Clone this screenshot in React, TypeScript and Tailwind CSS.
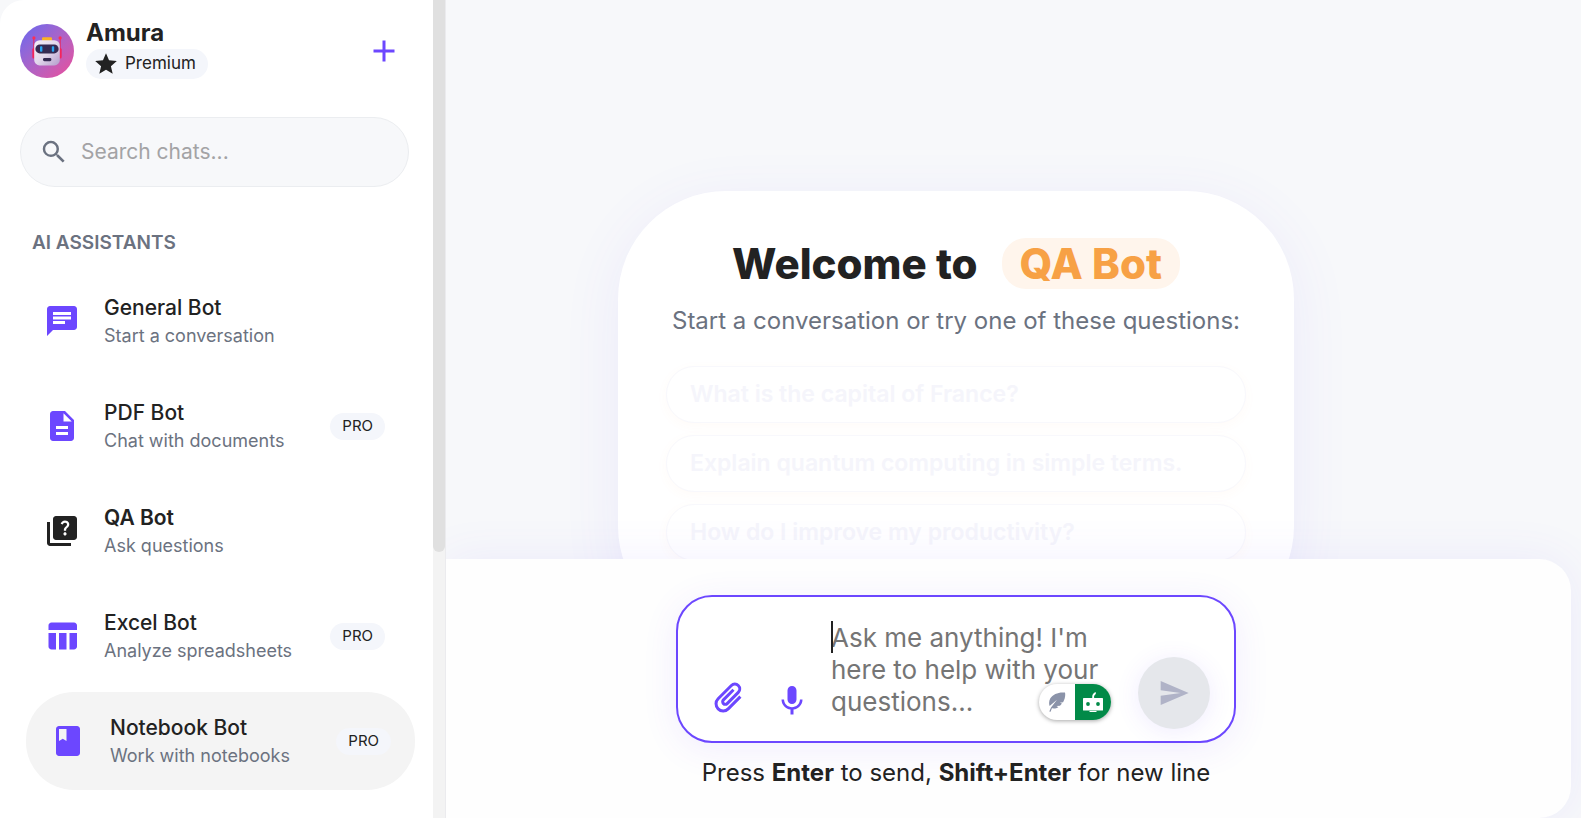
import React from 'react';
import {
  MdAdd,
  MdStar,
  MdSearch,
  MdChat,
  MdDescription,
  MdQuiz,
  MdTableChart,
  MdBook,
  MdMic,
  MdSend,
} from 'react-icons/md';

function RobotAvatar() {
  return (
    <span className="mb-px flex size-[54px] shrink-0 items-center justify-center rounded-full bg-linear-135 from-[#6366f1] to-[#ec4899]">
      <svg viewBox="0 0 30 30" className="size-[30px]" aria-hidden="true">
        <defs>
          <linearGradient id="face" x1="0" y1="0" x2="1" y2="1">
            <stop offset="0" stopColor="#f4eef7" />
            <stop offset="0.5" stopColor="#e2d8ec" />
            <stop offset="1" stopColor="#b39ccb" />
          </linearGradient>
        </defs>
        <path d="M1.800 2v14M28.200 2v14" stroke="#e8265f" strokeWidth="1" />
        <circle cx="1.900" cy="1.900" r="1.600" fill="#ff2d55" />
        <circle cx="28.100" cy="1.900" r="1.600" fill="#ff2d55" />
        <rect x="0.300" y="12" width="3" height="10.500" rx="1.500" fill="#f4245c" />
        <rect x="26.700" y="12" width="3" height="10.500" rx="1.500" fill="#f4245c" />
        <rect x="10" y="1.200" width="10" height="5" rx="1.200" fill="#fbb324" />
        <rect x="2.200" y="4.200" width="25.600" height="25.200" rx="5.500" fill="url(#face)" />
        <rect x="3.400" y="8.400" width="23.200" height="9" rx="4.400" fill="#352a52" />
        <rect x="8" y="10.200" width="2.400" height="5.600" rx="0.800" fill="#27a5f3" />
        <rect x="19.800" y="10.200" width="2.400" height="5.600" rx="0.800" fill="#27a5f3" />
        <rect x="11" y="22" width="8.400" height="3.200" rx="1.400" fill="#352a52" />
      </svg>
    </span>
  );
}

function PaperclipIcon() {
  return (
    <svg viewBox="0 0 24 24" className="size-9 rotate-45" fill="none" stroke="currentColor" strokeWidth="2" aria-hidden="true">
      <path d="M16.750 6v11.500a4.750 4.750 0 0 1-9.500 0V5a3.250 3.250 0 0 1 6.500 0v10.500a1.750 1.750 0 0 1-3.500 0V6" />
    </svg>
  );
}

function QuillRobotToggle() {
  return (
    <span className="flex h-9 w-[72px] overflow-hidden rounded-full bg-white shadow-[0_1px_4px_rgba(0,0,0,0.35)]">
      <span className="flex flex-1 items-center justify-center">
        <svg viewBox="0 0 18 20" className="h-5 w-[18px]" aria-hidden="true">
          <path d="M17 .6C11-.2 5 2 2.200 6.500 .9 9 .8 11.500 1.600 14L9 7.800 3 15.600 1.300 19.500l1.300.2 1.300-3.400c2.300.3 4.700.1 6.500-1.100L8.500 14l3.500-.2 2-2.400-2.200-.7 3.300-.4C17 7 17.600 3.500 17 .6z" fill="#8b93a9" />
        </svg>
      </span>
      <span className="flex flex-1 items-center justify-center bg-[#028a48]">
        <svg viewBox="0 0 20 20" className="size-5" aria-hidden="true">
          <path d="M12.500 0c-2.400 1-3.500 2.800-3.300 6h2c-.4-1.500 0-2.500 1.100-3.400.7-.7.800-1.500.2-2.600z" fill="#fff" />
          <rect x="0" y="6" width="20" height="12.500" rx="0.600" fill="#fff" />
          <rect x="6.500" y="18.900" width="7" height="1.100" fill="#fff" />
          <circle cx="5" cy="12" r="1.900" fill="#028a48" />
          <circle cx="15" cy="12" r="1.900" fill="#028a48" />
        </svg>
      </span>
    </span>
  );
}

const bots = [
  { name: 'General Bot', text: 'Start a conversation', icon: MdChat },
  { name: 'PDF Bot', text: 'Chat with documents', icon: MdDescription, pro: true },
  { name: 'QA Bot', text: 'Ask questions', icon: MdQuiz, current: true },
  { name: 'Excel Bot', text: 'Analyze spreadsheets', icon: MdTableChart, pro: true },
  { name: 'Notebook Bot', text: 'Work with notebooks', icon: MdBook, pro: true, hovered: true },
];

const questions = [
  'What is the capital of France?',
  'Explain quantum computing in simple terms.',
  'How do I improve my productivity?',
];

function Sidebar() {
  return (
    <aside className="relative z-20 flex w-[446px] shrink-0 overflow-hidden rounded-tl-3xl border-r border-[#ebebee] bg-white">
      <div className="flex min-w-0 flex-1 flex-col px-5 pt-[18px]">
        <header className="flex items-end gap-3">
          <RobotAvatar />
          <div className="flex flex-1 flex-col items-start gap-0.5">
            <h1 className="text-2xl leading-[29px] font-bold">Amura</h1>
            <span className="flex h-[30px] items-center gap-1.5 rounded-full bg-[#f4f6fb] pr-3 pl-[7px] text-[17px]">
              <MdStar className="size-[26px]" />
              Premium
            </span>
          </div>
          <button type="button" aria-label="New chat" className="mr-0.5 mb-px flex size-[54px] items-center justify-center text-[#6c47ff]">
            <MdAdd className="size-9" />
          </button>
        </header>
        <label className="mt-[38px] mr-1 flex h-[70px] shrink-0 items-center gap-3 rounded-full border border-[#ebedf0] bg-[#f7f8fa] px-[18px]">
          <MdSearch className="size-[30px] shrink-0 text-[#6b7280]" />
          <input type="text" aria-label="Search chats" placeholder="Search chats..." className="min-w-0 flex-1 bg-transparent text-[21px] outline-none placeholder:text-[#a3a3a5]" />
        </label>
        <h2 className="mt-[43px] ml-3 text-[19px] leading-[26px] font-semibold text-[#6b7280]">AI ASSISTANTS</h2>
        <nav className="mt-4 flex flex-col gap-[7px]">
          {bots.map(({ name, text, icon: Icon, pro, current, hovered }) => (
            <button
              key={name}
              type="button"
              className={`mr-1 flex h-[98px] items-center rounded-[48px] px-6 text-left ${hovered ? 'translate-x-1.5 bg-[#f4f4f4]' : ''}`}
            >
              <Icon className={`mr-6 size-9 shrink-0 ${current ? 'text-[#222]' : 'text-[#6c47ff]'}`} />
              <span className="flex flex-1 flex-col gap-px pt-px">
                <span className={`text-[21px] leading-7 ${current ? 'font-semibold' : 'font-medium'}`}>{name}</span>
                <span className="text-lg leading-[26px] text-[#6b7280]">{text}</span>
              </span>
              {pro && <span className="flex h-[27px] items-center rounded-full bg-[#f4f6fb] px-3 text-[15px]">PRO</span>}
            </button>
          ))}
        </nav>
      </div>
      <div className="w-3 shrink-0 bg-[#f3f3f3]">
        <div className="h-[67.500%] rounded-b-md bg-[#e0e0e0]" />
      </div>
    </aside>
  );
}

function WelcomeCard() {
  return (
    <section className="mx-auto w-[676px] max-w-full rounded-[108px] bg-white px-12 pt-[47px] pb-[73px] shadow-[0_12px_60px_rgba(108,71,255,0.08)]">
      <h2 className="flex items-center justify-center gap-6 text-[42px] leading-[51px] font-extrabold">
        Welcome to
        <span className="rounded-3xl bg-[#fff5ec] px-[18px] text-[#f7a145]">QA Bot</span>
      </h2>
      <p className="mt-3.5 text-center text-2xl leading-9 text-[#6b7280]">Start a conversation or try one of these questions:</p>
      <div className="mt-[27px] flex flex-col gap-3">
        {questions.map((question) => (
          <button
            key={question}
            type="button"
            className="h-[57px] rounded-[28px] border border-[#f8f8fc] bg-white px-[23px] text-left text-[23px] font-semibold text-[#f5f5fb] shadow-[0_3px_12px_rgba(247,161,69,0.04)]"
          >
            {question}
          </button>
        ))}
      </div>
    </section>
  );
}

function Composer() {
  return (
    <footer className="relative z-10 mr-2.5 flex flex-col items-center rounded-r-[32px] bg-[#fefefe] pt-9 pr-[105px] pb-[27px] shadow-[0_0_48px_rgba(108,71,255,0.08)]">
      <div className="flex w-full max-w-[560px] items-end rounded-[36px] border-2 border-[#6c47ff] bg-white px-6 pt-6 pb-3 shadow-[0_6px_36px_rgba(108,71,255,0.09)]">
        <div className="flex items-end gap-3 pb-1">
          <button type="button" aria-label="Attach a file" className="flex size-[54px] items-center justify-center text-[#6c47ff]">
            <PaperclipIcon />
          </button>
          <button type="button" aria-label="Record voice" className="flex size-12 items-center justify-center text-[#6c47ff]">
            <MdMic className="size-9" />
          </button>
        </div>
        <div className="relative mb-2 ml-[15px] flex-1">
          <textarea
            autoFocus
            aria-label="Message"
            placeholder="Ask me anything! I'm here to help with your questions..."
            className="peer block h-[100px] w-full resize-none overflow-hidden bg-transparent pt-px text-[26px] leading-8 caret-transparent outline-none placeholder:text-[#757575]"
          />
          <span className="absolute top-0 left-0 hidden h-8 w-0.5 bg-[#222] peer-placeholder-shown:block" />
          <span className="absolute right-px bottom-px">
            <QuillRobotToggle />
          </span>
        </div>
        <button type="button" aria-label="Send" className="ml-[26px] flex size-[72px] shrink-0 items-center justify-center rounded-full bg-[#e5e7eb] text-[#b0b3c7] shadow-[0_3px_24px_rgba(108,71,255,0.1)]">
          <MdSend className="size-8" />
        </button>
      </div>
      <p className="mt-3 text-2xl leading-9">
        Press <strong>Enter</strong> to send, <strong>Shift+Enter</strong> for new line
      </p>
    </footer>
  );
}

export default function App() {
  return (
    <div className="flex h-screen overflow-hidden bg-[#f7f8fa] font-['Inter',sans-serif] text-[#222]">
      <Sidebar />
      <main className="flex min-w-0 flex-1 flex-col">
        <div className="min-h-0 flex-1 pt-[191px] pr-[115px]">
          <WelcomeCard />
        </div>
        <Composer />
      </main>
    </div>
  );
}
